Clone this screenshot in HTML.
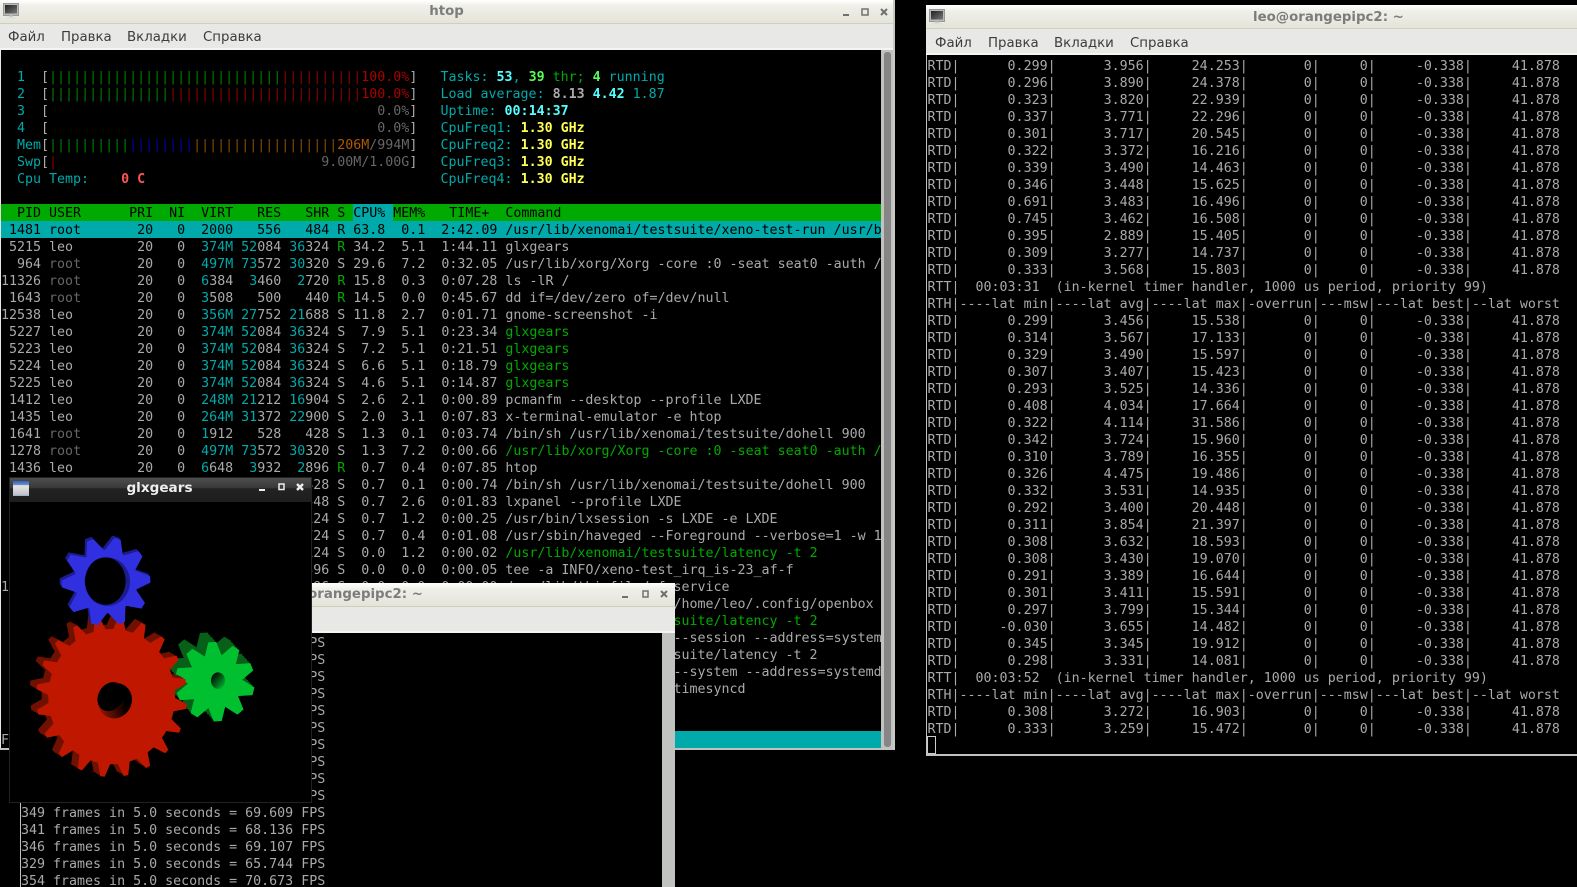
<!DOCTYPE html>
<html><head><meta charset="utf-8"><title>htop</title>
<style>
html,body{margin:0;padding:0;background:#000;width:1577px;height:887px;overflow:hidden}
.abs,.win,.title,.menu,.term,pre{position:absolute}
.win{background:#e8e8e6;overflow:hidden}
.title{left:0;right:0;top:0;height:24px;background:linear-gradient(#ffffff 0,#f0f0ea 25%,#e4e4da 100%);border-bottom:1px solid #cfcfbd;box-sizing:border-box;text-align:center;font:bold 13.33px/23px "DejaVu Sans",sans-serif;color:#7c7c7c}
.menu{left:0;right:0;top:24px;height:26px;background:#e8e8e6;border-bottom:2px solid #f4f4f2;box-sizing:border-box;font:13.33px/28px "DejaVu Sans",sans-serif;color:#3c3c3c}
.menu span{position:absolute;top:0}
.term{background:#000;overflow:hidden}
pre{margin:0;font:13.3px/17px "DejaVu Sans Mono",monospace;color:#aaa;white-space:pre;left:0}
.t{color:#00aaaa}.g{color:#00aa00}.d{color:#666}.r{color:#aa0000}.o{color:#b05a00}
.bg{color:#007c00}.br{color:#8c0000}.bb{color:#0000b4}.bo{color:#8c4a00}
.c{color:#55ffff;font-weight:bold}.l{color:#55ff55;font-weight:bold}.y{color:#ffff55;font-weight:bold}.w{color:#aaa;font-weight:bold}.rr{color:#ff5555;font-weight:bold}
.k{color:#000}
.bar{position:absolute;left:0;width:880px;height:17px}
</style></head><body>

<!-- HTOP WINDOW -->
<div class="win" style="left:0;top:0;width:895px;height:750px">
<div class="title" style="width:893px;right:auto">htop</div>
<svg class="abs" style="left:3px;top:3px" width="16" height="16" viewBox="0 0 16 16"><defs><linearGradient id="sc" x1="0" y1="0" x2="1" y2="1"><stop offset="0" stop-color="#222"/><stop offset="1" stop-color="#777"/></linearGradient></defs><rect x="0.5" y="0.5" width="15" height="12" fill="#bbb" stroke="#999"/><rect x="2" y="2" width="12" height="8.5" fill="url(#sc)"/><rect x="6" y="12.5" width="4" height="2" fill="#ccc"/><rect x="3.5" y="14" width="9" height="1.5" fill="#ddd"/></svg>
<svg class="abs" style="left:841px;top:6px" width="50" height="12" viewBox="0 0 50 12" fill="none" stroke="#707070" stroke-width="1.5"><path d="M2 9H8" stroke-width="2"/><path d="M21 3H27V9H21Z"/><path d="M40 3L46 9M46 3L40 9" stroke-width="2"/></svg>
<div class="menu" style="width:893px;right:auto"><span style="left:8px">Файл</span><span style="left:61px">Правка</span><span style="left:127px">Вкладки</span><span style="left:203px">Справка</span></div>
<div class="abs" style="left:881px;top:50px;width:14px;height:700px;background:#c2c3c1"></div>
<div class="abs" style="left:884px;top:52px;width:7px;height:695px;background:#858685;border-radius:3px"></div>
<div class="abs" style="left:0;top:748px;width:895px;height:2px;background:#c2c3c1"></div>
<div class="abs" style="left:893px;top:0;width:2px;height:750px;background:#c8c8c4"></div>
<div class="term" style="left:1px;top:50px;width:880px;height:698px">
<div class="bar" style="top:154px;background:#00aa00"></div>
<div class="abs" style="left:352px;top:154px;width:40px;height:17px;background:#00aaaa"></div>
<div class="bar" style="top:171px;background:#00aaaa"></div>
<div class="abs" style="left:16px;top:681px;width:864px;height:17px;background:#00aaaa"></div>
<pre style="left:0;top:19px"><span class="t">  1  </span>[<span class="bg">|||||||||||||||||||||||||||||</span><span class="br">||||||||||</span><span class="r">100.0%</span>]
<span class="t">  2  </span>[<span class="bg">|||||||||||||||</span><span class="br">||||||||||||||||||||||||</span><span class="r">100.0%</span>]
<span class="t">  3  </span>[<span class="d">                                         0.0%</span>]
<span class="t">  4  </span>[<span class="d">                                         0.0%</span>]
<span class="t">  Mem</span>[<span class="bg">||||||||||</span><span class="bb">||||||||</span><span class="bo">||||||||||||||||||</span><span class="o">206M</span><span class="d">/994M</span>]
<span class="t">  Swp</span>[<span class="br">|</span><span class="d">                                 9.00M/1.00G</span>]
<span class="t">  Cpu Temp:    </span><span class="rr">0 C</span></pre>
<pre style="left:439.5px;top:19px"><span class="t">Tasks: </span><span class="c">53</span><span class="t">, </span><span class="l">39</span><span class="g"> thr; </span><span class="l">4</span><span class="t"> running</span>
<span class="t">Load average: </span><span class="w">8.13 </span><span class="c">4.42 </span><span class="t">1.87</span>
<span class="t">Uptime: </span><span class="c">00:14:37</span>
<span class="t">CpuFreq1: </span><span class="y">1.30 GHz</span>
<span class="t">CpuFreq2: </span><span class="y">1.30 GHz</span>
<span class="t">CpuFreq3: </span><span class="y">1.30 GHz</span>
<span class="t">CpuFreq4: </span><span class="y">1.30 GHz</span></pre>
<pre style="left:0;top:155px"><span class="k">  PID USER      PRI  NI  VIRT   RES   SHR S CPU% MEM%   TIME+  Command</span>
<span class="k"> 1481 root       20   0  2000   556   484 R 63.8  0.1  2:42.09 /usr/lib/xenomai/testsuite/xeno-test-run /usr/b</span>
 5215 leo        20   0  <span class="t">374M 52</span>084 <span class="t">36</span>324 <span class="g">R</span> 34.2  5.1  1:44.11 glxgears
  964 <span class="d">root</span>       20   0  <span class="t">497M 73</span>572 <span class="t">30</span>320 S 29.6  7.2  0:32.05 /usr/lib/xorg/Xorg -core :0 -seat seat0 -auth /
11326 <span class="d">root</span>       20   0  <span class="t">6</span>384  <span class="t">3</span>460  <span class="t">2</span>720 <span class="g">R</span> 15.8  0.3  0:07.28 ls -lR /
 1643 <span class="d">root</span>       20   0  <span class="t">3</span>508   500   440 <span class="g">R</span> 14.5  0.0  0:45.67 dd if=/dev/zero of=/dev/null
12538 leo        20   0  <span class="t">356M 27</span>752 <span class="t">21</span>688 S 11.8  2.7  0:01.71 gnome-screenshot -i
 5227 leo        20   0  <span class="t">374M 52</span>084 <span class="t">36</span>324 S  7.9  5.1  0:23.34 <span class="g">glxgears</span>
 5223 leo        20   0  <span class="t">374M 52</span>084 <span class="t">36</span>324 S  7.2  5.1  0:21.51 <span class="g">glxgears</span>
 5224 leo        20   0  <span class="t">374M 52</span>084 <span class="t">36</span>324 S  6.6  5.1  0:18.79 <span class="g">glxgears</span>
 5225 leo        20   0  <span class="t">374M 52</span>084 <span class="t">36</span>324 S  4.6  5.1  0:14.87 <span class="g">glxgears</span>
 1412 leo        20   0  <span class="t">248M 21</span>212 <span class="t">16</span>904 S  2.6  2.1  0:00.89 pcmanfm --desktop --profile LXDE
 1435 leo        20   0  <span class="t">264M 31</span>372 <span class="t">22</span>900 S  2.0  3.1  0:07.83 x-terminal-emulator -e htop
 1641 <span class="d">root</span>       20   0  <span class="t">1</span>912   528   428 S  1.3  0.1  0:03.74 /bin/sh /usr/lib/xenomai/testsuite/dohell 900
 1278 <span class="d">root</span>       20   0  <span class="t">497M 73</span>572 <span class="t">30</span>320 S  1.3  7.2  0:00.66 <span class="g">/usr/lib/xorg/Xorg -core :0 -seat seat0 -auth /</span>
 1436 leo        20   0  <span class="t">6</span>648  <span class="t">3</span>932  <span class="t">2</span>896 <span class="g">R</span>  0.7  0.4  0:07.85 htop
 1640 <span class="d">root</span>       20   0  <span class="t">1</span>912   528   428 S  0.7  0.1  0:00.74 /bin/sh /usr/lib/xenomai/testsuite/dohell 900
 1398 leo        20   0  <span class="t">151M 26</span>048 <span class="t">20</span>548 S  0.7  2.6  0:01.83 lxpanel --profile LXDE
 1352 leo        20   0  <span class="t">201M 12</span>124 <span class="t">10</span>124 S  0.7  1.2  0:00.25 /usr/bin/lxsession -s LXDE -e LXDE
  512 <span class="d">root</span>       20   0  <span class="t">9</span>124  <span class="t">4</span>024  <span class="t">1</span>724 S  0.7  0.4  0:01.08 /usr/sbin/haveged --Foreground --verbose=1 -w 1
 1353 leo        20   0  <span class="t">201M 12</span>124 <span class="t">10</span>124 S  0.0  1.2  0:00.02 <span class="g">/usr/lib/xenomai/testsuite/latency -t 2</span>
 1479 <span class="d">root</span>       20   0  <span class="t">1</span>900   488   396 S  0.0  0.0  0:00.05 tee -a INFO/xeno-test_irq_is-23_af-f
12001 leo        20   0  <span class="t">1</span>900   488   396 S  0.0  0.0  0:00.00 /usr/lib/thisfile/of service
  900 leo        20   0  <span class="t">1</span>900   488   396 S  0.0  0.0  0:00.00 /usr/bin/openbox --c /home/leo/.config/openbox
  901 leo        20   0  <span class="t">1</span>900   488   396 S  0.0  0.0  0:00.00 <span class="g">/usr/lib/xenomai/testsuite/latency -t 2</span>
  902 leo        20   0  <span class="t">1</span>900   488   396 S  0.0  0.0  0:00.00 /usr/bin/dbus-daemon --session --address=system
  903 leo        20   0  <span class="t">1</span>900   488   396 S  0.0  0.0  0:00.00 /usr/lib/xenomai/testsuite/latency -t 2
  904 leo        20   0  <span class="t">1</span>900   488   396 S  0.0  0.0  0:00.00 /usr/bin/dbus-daemon --system --address=systemd
  905 leo        20   0  <span class="t">1</span>900   488   396 S  0.0  0.0  0:00.00 /lib/systemd/systemd-timesyncd


F</pre>
</div>
</div>

<!-- MIDDLE WINDOW -->
<div class="win" style="left:20px;top:583px;width:655px;height:304px;background:#c0c2c0">
<div class="title">leo@orangepipc2: ~</div>
<svg class="abs" style="left:600px;top:5px" width="50" height="12" viewBox="0 0 50 12" fill="none" stroke="#707070" stroke-width="1.5"><path d="M2 9H8" stroke-width="2"/><path d="M23 3H28V9H23Z"/><path d="M41 3L47 9M47 3L41 9" stroke-width="2"/></svg>
<div class="menu" style="height:26px"></div>
<div class="abs" style="left:642px;top:50px;width:13px;height:254px;background:#c0c2c0"></div>
<div class="term" style="left:1px;top:50px;width:641px;height:254px">
<pre style="left:0;top:2px">349 frames in 5.0 seconds = 69.609 FPS
349 frames in 5.0 seconds = 69.609 FPS
349 frames in 5.0 seconds = 69.609 FPS
349 frames in 5.0 seconds = 69.609 FPS
349 frames in 5.0 seconds = 69.609 FPS
349 frames in 5.0 seconds = 69.609 FPS
349 frames in 5.0 seconds = 69.609 FPS
349 frames in 5.0 seconds = 69.609 FPS
349 frames in 5.0 seconds = 69.609 FPS
349 frames in 5.0 seconds = 69.609 FPS
349 frames in 5.0 seconds = 69.609 FPS
341 frames in 5.0 seconds = 68.136 FPS
346 frames in 5.0 seconds = 69.107 FPS
329 frames in 5.0 seconds = 65.744 FPS
354 frames in 5.0 seconds = 70.673 FPS</pre>
</div>
</div>

<!-- GLXGEARS -->
<div class="abs" style="left:9px;top:477px;width:303px;height:326px;background:#000;box-sizing:border-box;border:1px solid #222">
<div class="abs" style="left:0;top:0;right:0;height:24px;background:linear-gradient(#4d4d4d 0,#3a3a3a 40%,#222 45%,#1e1e1e 100%);text-align:center;font:bold 13.6px/21px 'DejaVu Sans',sans-serif;color:#eee"><span style="position:relative;left:-1px">glxgears</span></div>
<div class="abs" style="left:3px;top:3px;width:16px;height:15px;background:linear-gradient(#2f62b8 0,#6c8fcf 25%,#e6e6e6 30%,#c4c4c4 90%,#8fa8d8 100%)"></div>
<svg class="abs" style="left:246px;top:3px" width="55" height="12" viewBox="0 0 55 12" fill="none" stroke="#eee" stroke-width="1.5"><path d="M3 9H9" stroke-width="2"/><path d="M23 3H28V8.5H23Z"/><path d="M41 3L47 9M47 3L41 9" stroke-width="2.4"/></svg>
<div class="abs" style="left:1px;top:24px;right:1px;bottom:1px;background:#000"></div>
</div>
<svg class="abs" style="left:0;top:470px" width="340" height="340" viewBox="0 0 1020 1020">
<defs>
<polygon id="tr" points="190,-21 234,-7 234,7 190,21"/>
<polygon id="tb" points="90,-28 133,-10 133,10 90,28"/>
<polygon id="tg" points="75,-26 119,-12 119,12 75,26"/>
<g id="red"><circle r="197"/><use href="#tr" transform="rotate(-11)"/><use href="#tr" transform="rotate(7)"/><use href="#tr" transform="rotate(25)"/><use href="#tr" transform="rotate(43)"/><use href="#tr" transform="rotate(61)"/><use href="#tr" transform="rotate(79)"/><use href="#tr" transform="rotate(97)"/><use href="#tr" transform="rotate(115)"/><use href="#tr" transform="rotate(133)"/><use href="#tr" transform="rotate(151)"/><use href="#tr" transform="rotate(169)"/><use href="#tr" transform="rotate(187)"/><use href="#tr" transform="rotate(205)"/><use href="#tr" transform="rotate(223)"/><use href="#tr" transform="rotate(241)"/><use href="#tr" transform="rotate(259)"/><use href="#tr" transform="rotate(277)"/><use href="#tr" transform="rotate(295)"/><use href="#tr" transform="rotate(313)"/><use href="#tr" transform="rotate(331)"/></g>
<g id="blue"><circle r="95"/><use href="#tb" transform="rotate(-3)"/><use href="#tb" transform="rotate(33)"/><use href="#tb" transform="rotate(69)"/><use href="#tb" transform="rotate(105)"/><use href="#tb" transform="rotate(141)"/><use href="#tb" transform="rotate(177)"/><use href="#tb" transform="rotate(213)"/><use href="#tb" transform="rotate(249)"/><use href="#tb" transform="rotate(285)"/><use href="#tb" transform="rotate(321)"/></g>
<g id="green"><circle r="80"/><use href="#tg" transform="rotate(-22)"/><use href="#tg" transform="rotate(14)"/><use href="#tg" transform="rotate(50)"/><use href="#tg" transform="rotate(86)"/><use href="#tg" transform="rotate(122)"/><use href="#tg" transform="rotate(158)"/><use href="#tg" transform="rotate(194)"/><use href="#tg" transform="rotate(230)"/><use href="#tg" transform="rotate(266)"/><use href="#tg" transform="rotate(302)"/></g>
<linearGradient id="hr" x1="1" y1="0" x2="0" y2="1"><stop offset="0.3" stop-color="#000"/><stop offset="0.9" stop-color="#a01800"/></linearGradient>
<linearGradient id="hg" x1="0" y1="0" x2="1" y2="1"><stop offset="0.1" stop-color="#000"/><stop offset="0.9" stop-color="#00b030"/></linearGradient>
</defs>
<g fill="#066018"><use href="#green" transform="translate(620,607)"/><use href="#green" transform="translate(626,614)"/><use href="#green" transform="translate(633,621)"/><use href="#green" transform="translate(639,628)"/></g>
<g transform="translate(645,635)" fill="#00c030"><use href="#green"/></g>
<ellipse cx="654" cy="632" rx="21" ry="25" fill="url(#hg)"/>
<g fill="#701000"><use href="#red" transform="translate(315,668) scale(.966,1.03)"/><use href="#red" transform="translate(322,672) scale(.966,1.03)"/><use href="#red" transform="translate(329,676) scale(.966,1.03)"/></g>
<g transform="translate(335,680) scale(.966,1.03)" fill="#c01800"><use href="#red"/></g>
<ellipse cx="345" cy="692" rx="50" ry="54" fill="url(#hr)" transform="rotate(30 345 692)"/>
<ellipse cx="332" cy="680" rx="37" ry="46" fill="#000" transform="rotate(32 332 680)"/>
<g fill="#1c1c90"><use href="#blue" transform="translate(312,328)"/><use href="#blue" transform="translate(315,331)"/></g>
<g transform="translate(318,335)" fill="#3030e0"><use href="#blue"/></g>
<ellipse cx="322" cy="335" rx="68" ry="73" fill="#1c1c90"/>
<ellipse cx="316" cy="333" rx="61" ry="71" fill="#000"/>
</svg>

<!-- RIGHT WINDOW -->
<div class="win" style="left:926px;top:5px;width:651px;height:751px;background:#c2c3c1">
<div class="title" style="text-align:left;padding-left:327px;line-height:26px">leo@orangepipc2: ~</div>
<svg class="abs" style="left:3px;top:4px" width="16" height="16" viewBox="0 0 16 16"><rect x="0.5" y="0.5" width="15" height="12" fill="#bbb" stroke="#999"/><rect x="2" y="2" width="12" height="8.5" fill="url(#sc)"/><rect x="6" y="12.5" width="4" height="2" fill="#ccc"/><rect x="3.5" y="14" width="9" height="1.5" fill="#ddd"/></svg>
<div class="menu" style="line-height:30px"><span style="left:9px">Файл</span><span style="left:62px">Правка</span><span style="left:128px">Вкладки</span><span style="left:204px">Справка</span></div>
<div class="term" style="left:1px;top:50px;width:650px;height:699px">
<pre style="left:0.5px;top:3px">RTD|      0.299|      3.956|     24.253|       0|     0|     -0.338|     41.878
RTD|      0.296|      3.890|     24.378|       0|     0|     -0.338|     41.878
RTD|      0.323|      3.820|     22.939|       0|     0|     -0.338|     41.878
RTD|      0.337|      3.771|     22.296|       0|     0|     -0.338|     41.878
RTD|      0.301|      3.717|     20.545|       0|     0|     -0.338|     41.878
RTD|      0.322|      3.372|     16.216|       0|     0|     -0.338|     41.878
RTD|      0.339|      3.490|     14.463|       0|     0|     -0.338|     41.878
RTD|      0.346|      3.448|     15.625|       0|     0|     -0.338|     41.878
RTD|      0.691|      3.483|     16.496|       0|     0|     -0.338|     41.878
RTD|      0.745|      3.462|     16.508|       0|     0|     -0.338|     41.878
RTD|      0.395|      2.889|     15.405|       0|     0|     -0.338|     41.878
RTD|      0.309|      3.277|     14.737|       0|     0|     -0.338|     41.878
RTD|      0.333|      3.568|     15.803|       0|     0|     -0.338|     41.878
RTT|  00:03:31  (in-kernel timer handler, 1000 us period, priority 99)
RTH|----lat min|----lat avg|----lat max|-overrun|---msw|---lat best|--lat worst
RTD|      0.299|      3.456|     15.538|       0|     0|     -0.338|     41.878
RTD|      0.314|      3.567|     17.133|       0|     0|     -0.338|     41.878
RTD|      0.329|      3.490|     15.597|       0|     0|     -0.338|     41.878
RTD|      0.307|      3.407|     15.423|       0|     0|     -0.338|     41.878
RTD|      0.293|      3.525|     14.336|       0|     0|     -0.338|     41.878
RTD|      0.408|      4.034|     17.664|       0|     0|     -0.338|     41.878
RTD|      0.322|      4.114|     31.586|       0|     0|     -0.338|     41.878
RTD|      0.342|      3.724|     15.960|       0|     0|     -0.338|     41.878
RTD|      0.310|      3.789|     16.355|       0|     0|     -0.338|     41.878
RTD|      0.326|      4.475|     19.486|       0|     0|     -0.338|     41.878
RTD|      0.332|      3.531|     14.935|       0|     0|     -0.338|     41.878
RTD|      0.292|      3.400|     20.448|       0|     0|     -0.338|     41.878
RTD|      0.311|      3.854|     21.397|       0|     0|     -0.338|     41.878
RTD|      0.308|      3.632|     18.593|       0|     0|     -0.338|     41.878
RTD|      0.308|      3.430|     19.070|       0|     0|     -0.338|     41.878
RTD|      0.291|      3.389|     16.644|       0|     0|     -0.338|     41.878
RTD|      0.301|      3.411|     15.591|       0|     0|     -0.338|     41.878
RTD|      0.297|      3.799|     15.344|       0|     0|     -0.338|     41.878
RTD|     -0.030|      3.655|     14.482|       0|     0|     -0.338|     41.878
RTD|      0.345|      3.345|     19.912|       0|     0|     -0.338|     41.878
RTD|      0.298|      3.331|     14.081|       0|     0|     -0.338|     41.878
RTT|  00:03:52  (in-kernel timer handler, 1000 us period, priority 99)
RTH|----lat min|----lat avg|----lat max|-overrun|---msw|---lat best|--lat worst
RTD|      0.308|      3.272|     16.903|       0|     0|     -0.338|     41.878
RTD|      0.333|      3.259|     15.472|       0|     0|     -0.338|     41.878</pre>
<div class="abs" style="left:0;top:681px;width:7px;height:16px;border:1px solid #ccc"></div>
</div>
</div>
</body></html>
